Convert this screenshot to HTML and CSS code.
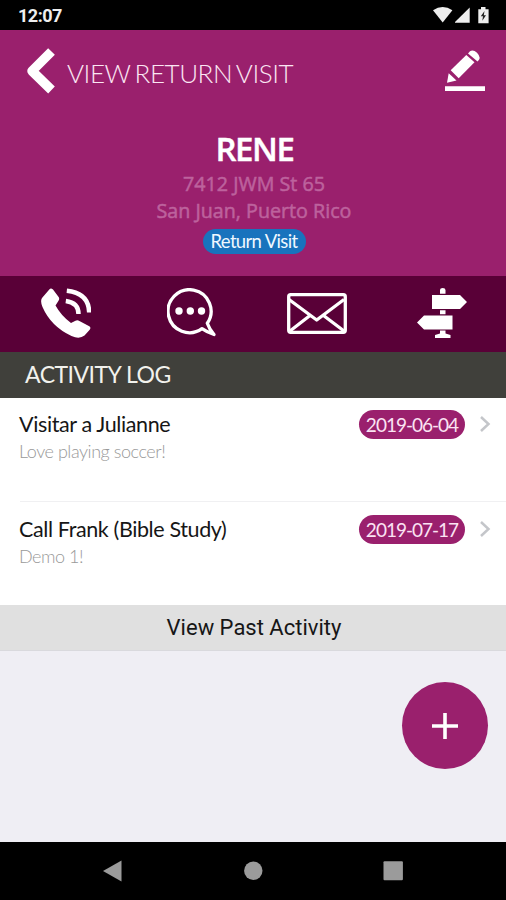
FILE: index.html
```html
<!DOCTYPE html>
<html lang="en">
<head>
<meta charset="utf-8">
<title>View Return Visit</title>
<link rel="stylesheet" href="styles.css">
</head>
<body>
<div class="statusbar">
  <span class="clock">12:07</span>
  <svg class="status-icons" width="60" height="20" viewBox="0 0 60 20">
    <path d="M0 5.200Q9.700-1 19.400 5.200L9.700 17.400Z"/>
    <path d="M22 17.800V17L36.700 2.500V17.800Z"/>
    <path d="M45.300 4.300H48V2H52.500V4.300H55.600V18.200H45.300Z"/>
    <path class="bolt" d="M51.500 6L47.800 11.300H50L49.300 15.800L53 10.300H50.800Z"/>
  </svg>
</div>
<header class="header">
  <div class="titlebar">
    <svg class="back" width="30" height="48" viewBox="0 0 30 48"><path d="M25.500 4.500L6 24L25.500 43"/></svg>
    <h1 class="title">VIEW RETURN VISIT</h1>
    <svg class="edit" width="42" height="42" viewBox="0 0 42 42">
      <path d="M1 36.200H41V41H1Z"/>
      <path d="M3 32.700L4.700 23.200L12.500 30.400Z"/>
      <path d="M6.700 20.200L22.300 5L30.500 12.200L14.700 28.200Z"/>
      <path d="M24 3.400L26 1.300Q29-1 33 2.700Q37 7 35 9.700L33.500 11.600Z"/>
    </svg>
  </div>
  <div class="person">
    <h2 class="name">RENE</h2>
    <p class="address">7412 JWM St 65<br>San Juan, Puerto Rico</p>
    <span class="tag">Return Visit</span>
  </div>
</header>
<nav class="actions">
  <svg width="50" height="50" viewBox="0 0 50 50">
    <path class="fill" d="M1 10L8.500 1.200Q10-.5 12 1.600L17.800 9.300Q18.700 11 17.500 12.700L14.500 17.500Q20 27.500 30 35L34.500 32.700Q36.500 31.700 38.400 33L48.300 38.300Q50.300 39.700 48.700 41.800L43.500 47.500Q38.500 51.500 30.500 48Q10 38.500 1.500 19Q-1 13 1 10Z"/>
    <path class="arc wide" d="M24.800 13Q37.500 14.700 37.500 26"/>
    <path class="arc wide" d="M25.800 2.800Q47.700 5 48.200 24.500"/>
  </svg>
  <svg class="chat" width="50" height="50" viewBox="0 0 50 50">
    <path class="arc" d="M40.300 35.300A21.500 21.500 0 1 0 35 40.700Q40.500 44.500 47 46.500Q42.300 41.200 40.300 35.300Z"/>
    <circle class="fill" cx="12" cy="23" r="3.700"/><circle class="fill" cx="23.300" cy="23" r="3.700"/><circle class="fill" cx="34.500" cy="23" r="3.700"/>
  </svg>
  <svg class="mail" width="60" height="41" viewBox="0 0 60 41">
    <rect class="arc" x="1.700" y="1.700" width="56.600" height="37.600" rx="2"/>
    <path class="arc" d="M2 6.500L29.700 27L57 6.500M3 38L23 22.500M57 38L36.500 22.500"/>
  </svg>
  <svg width="50" height="50" viewBox="0 0 50 50">
    <path class="fill" d="M15 7H43L50 14L43 21H15ZM7 27.500H35.500V41.500H7L0 34.500ZM23 22.200H28.500V26.300H23ZM23 5.700V2Q23 0 25.700 0T28.500 2V5.700ZM23 42.500H28.500V45.500L33.500 47V50H18V47L23 45.500Z"/>
  </svg>
</nav>
<h3 class="section">ACTIVITY LOG</h3>
<main class="list">
  <article class="item">
    <div class="copy"><p class="item-title">Visitar a Julianne</p><p class="note">Love playing soccer!</p></div>
    <time class="date">2019-06-04</time>
    <svg class="chevron" width="12" height="18" viewBox="0 0 12 18"><path d="M2 2L9.500 9L2 16"/></svg>
  </article>
  <article class="item">
    <div class="copy"><p class="item-title">Call Frank (Bible Study)</p><p class="note">Demo 1!</p></div>
    <time class="date">2019-07-17</time>
    <svg class="chevron" width="12" height="18" viewBox="0 0 12 18"><path d="M2 2L9.500 9L2 16"/></svg>
  </article>
</main>
<div class="past">View Past Activity</div>
<div class="blank">
  <div class="fab"><svg width="26" height="28" viewBox="0 0 26 28"><path d="M0 14H26M13 1V27"/></svg></div>
</div>
<footer class="navbar">
  <svg width="20" height="22" viewBox="0 0 20 22"><path d="M0 11L18.500 .5V21.500Z"/></svg>
  <svg width="20" height="20" viewBox="0 0 20 20"><circle cx="10.300" cy="9.700" r="9.200"/></svg>
  <svg width="20" height="20" viewBox="0 0 20 20"><rect x=".5" y=".3" width="19.400" height="19" rx="1"/></svg>
</footer>
</body>
</html>
```
FILE: styles.css
```css
* { box-sizing: border-box; }
body { margin: 0; width: 506px; height: 900px; overflow: hidden; display: flex; flex-direction: column; background: #efeef4; font-family: Lato, "Liberation Sans", sans-serif; }
h1, h2, h3, p { margin: 0; font-weight: 400; white-space: nowrap; }
svg { display: block; flex: none; }
.statusbar { height: 30px; flex: none; background: #000; color: #eee; display: flex; justify-content: space-between; padding: 5px 13px 0 18px; }
.clock { font: 700 18px/21px Roboto, sans-serif; letter-spacing: -.5px; }
.status-icons { fill: #eee; }
.status-icons .bolt { fill: #222; }
.header { height: 246px; flex: none; background: #9a206d; color: #fff; }
.titlebar { height: 82px; display: flex; align-items: center; padding: 0 20px 0 26px; }
.back path { fill: none; stroke: #fff; stroke-width: 9.5; stroke-linejoin: round; }
.title { margin-left: 11px; padding-top: 4px; flex: 1; font-size: 26px; line-height: 32px; font-weight: 300; letter-spacing: -.45px; word-spacing: -2px; color: #fbe6f3; }
.edit { fill: #fff; }
.person { display: flex; flex-direction: column; align-items: center; text-align: center; padding-top: 16px; }
.name { font: 600 33px/42px "Open Sans", sans-serif; letter-spacing: -1.4px; padding-left: 3px; -webkit-text-stroke: .4px #fff; }
.address { font: 400 19.7px/27px "Open Sans", sans-serif; color: #bd629d; -webkit-text-stroke: .5px #bd629d; padding-left: 2px; }
.tag { margin: 5px 0 0 2px; width: 103px; height: 25px; border-radius: 13px; background: #1873bd; font-size: 18.5px; line-height: 25px; letter-spacing: -.65px; color: #eff8ff; white-space: nowrap; }
.actions { height: 76px; flex: none; background: #590037; display: flex; justify-content: space-between; align-items: center; padding: 0 39px 2px 41px; }
.chat { margin-left: 6px; }
.fill { fill: #fff; }
.arc { fill: none; stroke: #fff; stroke-width: 3.3; stroke-linejoin: round; }
.arc.wide { stroke-width: 4.5; }
.section { height: 46px; flex: none; background: #40403b; color: #f2f2ed; padding-left: 25px; font-size: 23px; line-height: 45px; letter-spacing: -.5px; }
.list { flex: none; height: 207px; background: #fff; padding-left: 20px; }
.item { height: 103px; display: flex; align-items: flex-start; padding: 12px 15px 0 0; }
.item + .item { height: 104px; border-top: 1px solid #f0f0f2; padding-top: 12.6px; }
.copy { flex: 1; margin-left: -1px; }
.item-title { font-size: 21.5px; line-height: 28px; letter-spacing: -.38px; color: #161616; }
.note { font-size: 18px; line-height: 26px; font-weight: 300; letter-spacing: -.45px; color: #999; }
.date { width: 106px; height: 29px; border-radius: 15px; background: #9a206d; color: #fbe3f3; text-align: center; font-size: 19px; line-height: 29px; letter-spacing: -1px; }
.chevron { margin: 5px 0 0 14px; fill: none; stroke: #c4c6ca; stroke-width: 2.5; }
.past { height: 46px; flex: none; background: #e0e0e0; border-bottom: 1px solid #d9d9dd; text-align: center; font: 400 22px/45px Roboto, sans-serif; color: #161616; padding-left: 2px; }
.blank { height: 191px; flex: none; display: flex; justify-content: flex-end; padding: 31px 18px 0 0; }
.fab { width: 86px; height: 87px; border-radius: 50%; background: #9a206d; display: flex; align-items: center; justify-content: center; }
.fab svg { stroke: #fff; stroke-width: 3.6; }
.navbar { height: 58px; flex: none; background: #000; display: flex; justify-content: space-between; align-items: center; padding: 0 103px; fill: #9b9b9b; }
```
